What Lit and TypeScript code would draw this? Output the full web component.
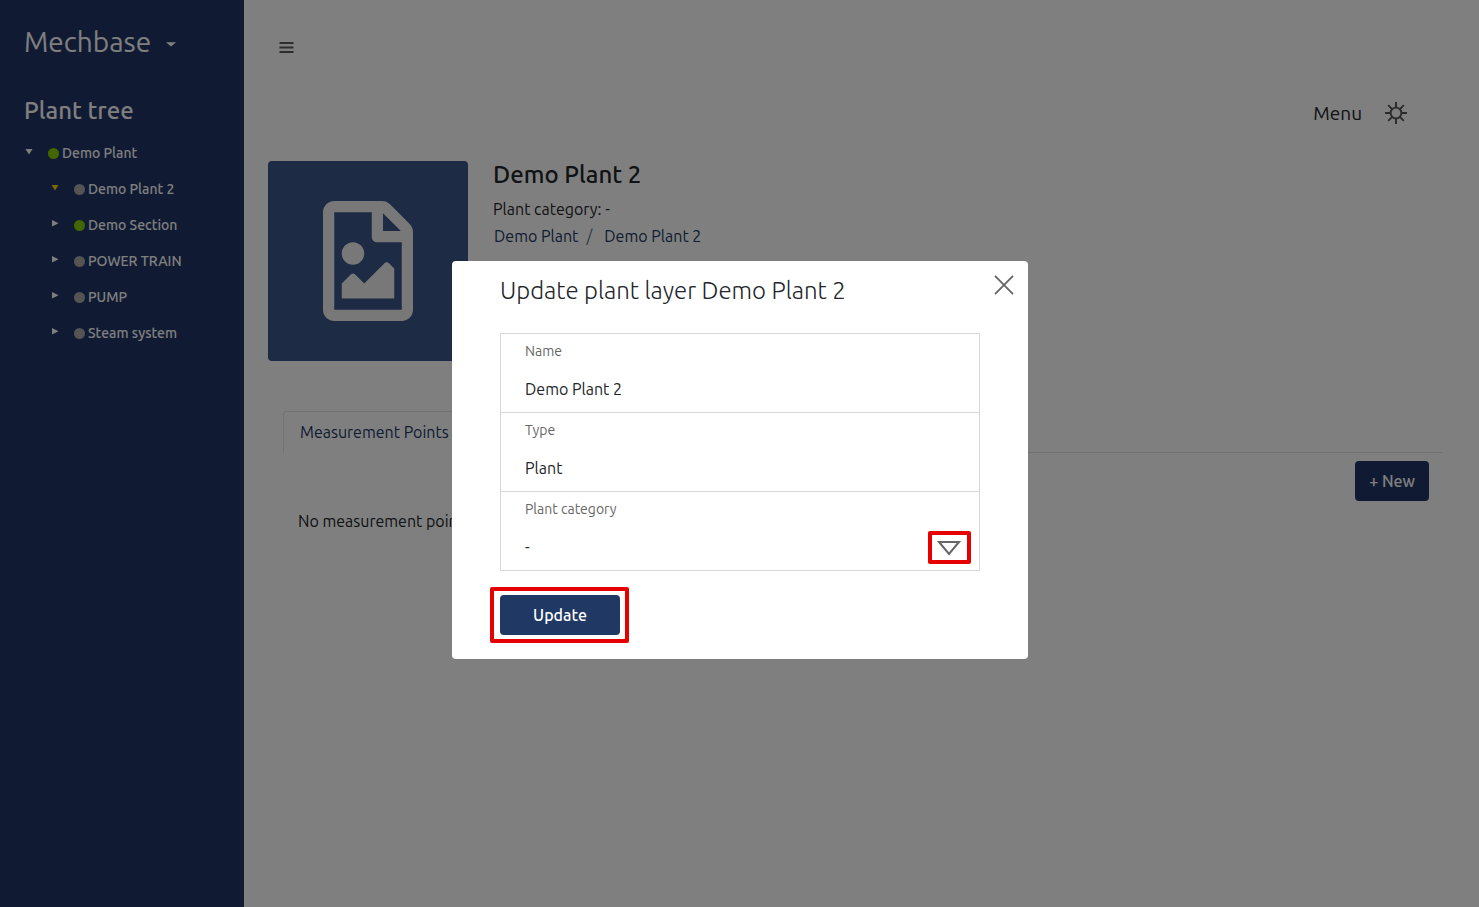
import { LitElement, html, css, svg } from "lit";
import { customElement, property, state } from "lit/decorators.js";
import { classMap } from "lit/directives/class-map.js";

interface PlantNode {
  name: string;
  status: "ok" | "idle";
  open?: boolean;
  current?: boolean;
  children?: PlantNode[];
}

const plants: PlantNode[] = [
  {
    name: "Demo Plant",
    status: "ok",
    open: true,
    children: [
      { name: "Demo Plant 2", status: "idle", open: true, current: true },
      { name: "Demo Section", status: "ok" },
      { name: "POWER TRAIN", status: "idle" },
      { name: "PUMP", status: "idle" },
      { name: "Steam system", status: "idle" },
    ],
  },
];

const reset = css`
  * {
    box-sizing: border-box;
  }
  button,
  input,
  select {
    font: inherit;
    color: inherit;
    margin: 0;
    padding: 0;
    border: 0;
    background: none;
  }
  button {
    cursor: pointer;
  }
  a {
    color: inherit;
    text-decoration: none;
  }
  ul,
  ol {
    list-style: none;
    margin: 0;
    padding: 0;
  }
  h1,
  h2,
  p {
    margin: 0;
  }
  svg {
    display: block;
  }
`;

@customElement("plant-sidebar")
export class PlantSidebar extends LitElement {
  static styles = [
    reset,
    css`
      :host {
        display: block;
        padding: 24px;
        background: #203666;
        color: #fff;
      }
      .brand {
        display: flex;
        align-items: center;
        gap: 15px;
        font-size: 28px;
        line-height: 36px;
      }
      .brand svg {
        margin-top: 5px;
      }
      .heading {
        margin: 33px 0 6px;
        font-size: 24px;
        font-weight: 500;
        line-height: 36px;
      }
      .branch .branch {
        padding-left: 26px;
      }
      .row {
        display: flex;
        align-items: center;
        height: 36px;
        font-size: 14px;
        font-weight: 500;
      }
      .toggle {
        width: 24px;
        height: 20px;
        color: #fff;
      }
      .toggle.current {
        color: #ffd000;
      }
      .dot {
        width: 11px;
        height: 11px;
        margin-right: 3px;
        border-radius: 50%;
        background: #a8a8a8;
      }
      .dot.ok {
        background: #88cc00;
      }
    `,
  ];

  private branch(nodes: PlantNode[]): unknown {
    return html`<ul class="branch">
      ${nodes.map(
        (node) => html`<li>
          <div class="row">
            <button
              class=${classMap({ toggle: true, current: !!node.current })}
              aria-label="Toggle ${node.name}"
              aria-expanded=${node.open ? "true" : "false"}
            >
              <svg width="10" height="12" viewBox="0 0 10 12" fill="currentColor">
                ${node.open
                  ? svg`<path d="M1.500 2h7L5 7.500z"/>`
                  : svg`<path d="M2 1v6.500l6.500-3.200z"/>`}
              </svg>
            </button>
            <span class=${classMap({ dot: true, ok: node.status === "ok" })}></span>
            <a href="#">${node.name}</a>
          </div>
          ${node.children ? this.branch(node.children) : ""}
        </li>`
      )}
    </ul>`;
  }

  render() {
    return html`
      <button class="brand">
        Mechbase
        <svg width="10" height="5" viewBox="0 0 10 5"><path d="M0 .3h10L5 4.6z" fill="currentColor" /></svg>
      </button>
      <h2 class="heading">Plant tree</h2>
      <nav aria-label="Plant tree">${this.branch(plants)}</nav>
    `;
  }
}

@customElement("plant-page")
export class PlantPage extends LitElement {
  static styles = [
    reset,
    css`
      :host {
        display: block;
        padding: 0 36px 24px 24px;
        color: #212529;
      }
      .topbar {
        display: flex;
        align-items: center;
        height: 94px;
        padding-left: 11px;
        color: #5a5a5a;
      }
      .menu {
        display: flex;
        justify-content: flex-end;
        align-items: center;
        gap: 23px;
        height: 38px;
        margin-bottom: 29px;
        padding-right: 36px;
        font-size: 19px;
      }
      .menu svg {
        color: #545454;
      }
      .summary {
        display: flex;
        gap: 25px;
        margin-bottom: 50px;
      }
      .thumb {
        display: grid;
        place-items: center;
        width: 200px;
        height: 200px;
        border-radius: 4px;
        background: #3a568a;
        color: #f0f1f2;
      }
      .title {
        font-size: 24px;
        font-weight: 500;
        line-height: 27px;
        margin-bottom: 8px;
      }
      .line {
        font-size: 16px;
        line-height: 27px;
      }
      .crumbs {
        display: flex;
        gap: 8px;
        padding-left: 1px;
        color: #203864;
      }
      .crumbs li + li {
        display: flex;
        gap: 12px;
      }
      .crumbs li + li::before {
        content: "/";
        color: #6c757d;
      }
      .tabs {
        display: flex;
        margin-left: 15px;
        border-bottom: 1px solid #dee2e6;
      }
      .tab {
        height: 42px;
        margin-bottom: -1px;
        padding: 0 16px;
        border: 1px solid #dee2e6;
        border-bottom-color: #fff;
        border-radius: 4px 4px 0 0;
        background: #fff;
        color: #203864;
        font-size: 16px;
      }
      .panel {
        padding: 8px 14px 0 30px;
        font-size: 16px;
      }
      .actions {
        display: flex;
        justify-content: flex-end;
        margin-bottom: 8px;
      }
      .new {
        height: 40px;
        padding: 0 14px;
        border-radius: 4px;
        background: #203666;
        color: #fff;
        font-weight: 500;
      }
      .empty {
        line-height: 24px;
      }
    `,
  ];

  render() {
    return html`
      <header>
        <div class="topbar">
          <button aria-label="Toggle sidebar">
            <svg width="15" height="14" viewBox="0 0 15 14" fill="none" stroke="currentColor" stroke-width="2">
              <path d="M.5 3h14M.5 7.500h14M.5 12h14" />
            </svg>
          </button>
        </div>
        <div class="menu">
          <a href="#">Menu</a>
          <button aria-label="Settings">
            <svg width="22" height="22" viewBox="0 0 22 22" fill="none" stroke="currentColor" stroke-width="1.9">
              <circle cx="11" cy="11" r="5.4" />
              <path
                d="M11 0v5.500M11 16.500V22M0 11h5.500M16.500 11H22M3.200 3.200l3.900 3.900M14.900 14.900l3.900 3.900M3.200 18.800l3.900-3.900M14.900 7.100l3.900-3.900"
              />
            </svg>
          </button>
        </div>
      </header>
      <section class="summary">
        <div class="thumb">
          <svg width="90" height="120" viewBox="0 0 384 512" fill="currentColor" role="img" aria-label="No image">
            <path
              d="M369.900 97.900L286 14C277 5 264.800 0 252.100 0H48C21.500 0 0 21.500 0 48v416c0 26.500 21.500 48 48 48h288c26.500 0 48-21.500 48-48V131.900c0-12.700-5.100-25-14.100-34zM332.100 128H256V51.900l76.100 76.100zM48 464V48h160v104c0 13.300 10.700 24 24 24h104v288H48zm32-48h224V288l-23.500-23.500c-4.700-4.700-12.300-4.700-17 0L176 352l-39.500-39.500c-4.700-4.700-12.300-4.700-17 0L80 352v64zm48-240c-26.500 0-48 21.500-48 48s21.500 48 48 48 48-21.500 48-48-21.500-48-48-48z"
            />
          </svg>
        </div>
        <div>
          <h1 class="title">Demo Plant 2</h1>
          <p class="line">Plant category: -</p>
          <nav aria-label="Breadcrumb">
            <ol class="line crumbs">
              <li><a href="#">Demo Plant</a></li>
              <li><a href="#">Demo Plant 2</a></li>
            </ol>
          </nav>
        </div>
      </section>
      <div class="tabs" role="tablist">
        <button class="tab" role="tab" aria-selected="true">Measurement Points</button>
      </div>
      <section class="panel">
        <div class="actions"><button class="new">+ New</button></div>
        <p class="empty">No measurement points</p>
      </section>
    `;
  }
}

@customElement("update-dialog")
export class UpdateDialog extends LitElement {
  @property() plant = "Demo Plant 2";

  static styles = [
    reset,
    css`
      :host {
        position: fixed;
        inset: 0;
        display: flex;
        justify-content: center;
        align-items: center;
        padding: 13px 0 0 1px;
        background: rgba(0, 0, 0, 0.5);
      }
      .modal {
        position: relative;
        width: 576px;
        max-width: 100%;
        padding: 12px 48px 24px;
        border-radius: 4px;
        background: #fff;
        color: #212529;
      }
      .title {
        margin-bottom: 24px;
        font-size: 24px;
        font-weight: 300;
        line-height: 36px;
      }
      .close {
        position: absolute;
        top: 14px;
        right: 14px;
        color: #666;
      }
      .fields {
        margin-bottom: 24px;
        border: 1px solid #d8d8d8;
      }
      .field {
        display: flex;
        flex-direction: column;
        gap: 7px;
        padding: 7px 24px 3px;
      }
      .field + .field {
        border-top: 1px solid #d8d8d8;
      }
      .label {
        color: #666;
        font-size: 14px;
        line-height: 21px;
      }
      .value {
        display: block;
        width: 100%;
        height: 40px;
        font-size: 16px;
        outline: 0;
        appearance: none;
      }
      .choice {
        position: relative;
      }
      .choice svg {
        position: absolute;
        top: 13px;
        right: -6px;
        pointer-events: none;
        color: #666;
      }
      .mark {
        position: absolute;
        border: 4px solid #e60000;
        border-radius: 2px;
        pointer-events: none;
      }
      .choice .mark {
        inset: 4px -16px 3px auto;
        width: 43px;
      }
      .submit {
        position: relative;
        width: 120px;
      }
      .submit .mark {
        inset: -8px -9px -8px -10px;
      }
      .update {
        display: block;
        width: 100%;
        height: 40px;
        border-radius: 4px;
        background: #1f3864;
        color: #fff;
        font-size: 16px;
        font-weight: 500;
      }
    `,
  ];

  render() {
    return html`
      <form class="modal" role="dialog" aria-labelledby="title" @submit=${(e: Event) => e.preventDefault()}>
        <h2 class="title" id="title">Update plant layer ${this.plant}</h2>
        <button class="close" type="button" aria-label="Close">
          <svg width="20" height="20" viewBox="0 0 20 20" fill="none" stroke="currentColor" stroke-width="1.8">
            <path d="M1 .8l18 18.400M19 .8L1 19.200" />
          </svg>
        </button>
        <div class="fields">
          <div class="field">
            <label class="label" for="name">Name</label>
            <input class="value" id="name" .value=${this.plant} />
          </div>
          <div class="field">
            <label class="label" for="type">Type</label>
            <input class="value" id="type" value="Plant" readonly />
          </div>
          <div class="field">
            <label class="label" for="category">Plant category</label>
            <div class="choice">
              <select class="value" id="category">
                <option>-</option>
              </select>
              <svg width="24" height="16" viewBox="0 0 24 16" fill="none" stroke="currentColor" stroke-width="2">
                <path d="M2 2h20l-10 12z" />
              </svg>
              <span class="mark"></span>
            </div>
          </div>
        </div>
        <div class="submit">
          <button class="update" type="submit">Update</button>
          <span class="mark"></span>
        </div>
      </form>
    `;
  }
}

@customElement("app-root")
export class AppRoot extends LitElement {
  @state() private editing = true;

  static styles = css`
    :host {
      display: grid;
      grid-template-columns: 244px minmax(0, 1fr);
      min-height: 100vh;
      background: #fff;
      font-family: Ubuntu, "Noto Sans", "Open Sans", sans-serif;
      font-size: 16px;
    }
  `;

  render() {
    return html`
      <plant-sidebar></plant-sidebar>
      <plant-page></plant-page>
      ${this.editing ? html`<update-dialog></update-dialog>` : ""}
    `;
  }
}
